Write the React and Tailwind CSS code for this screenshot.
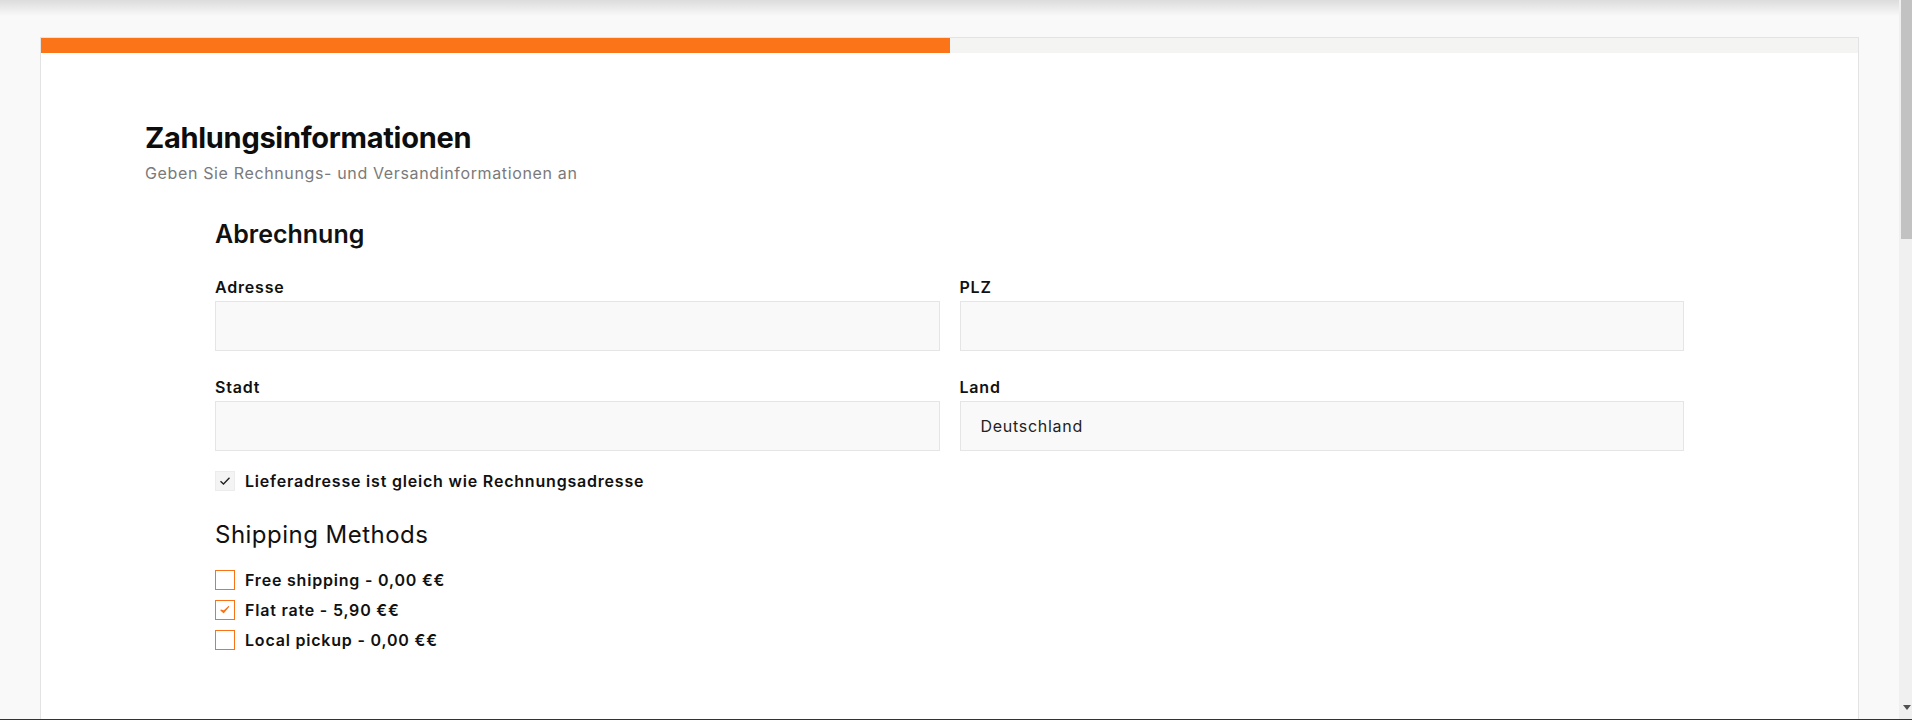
const labelCls = "block text-[16px] leading-[24px] font-semibold tracking-[0.05em] text-[#111]";
const inputCls =
  "block w-full h-[50px] bg-[#f9f9f9] border border-[#e5e5e5] px-5 text-[16px] leading-[24px] tracking-[0.045em] text-[#222] outline-none";

function Field({ label, value, className = "" }) {
  return (
    <div className={className}>
      <label className={labelCls}>{label}</label>
      <input className={`${inputCls} mt-[2px]`} defaultValue={value} />
    </div>
  );
}

function OrangeBox({ checked }) {
  return (
    <span className="w-5 h-5 shrink-0 border border-[#f97316] bg-white flex items-center justify-center">
      {checked && (
        <svg width="10" height="10" viewBox="0 0 10 10">
          <path d="M1 5.2 L3.6 7.6 L8.6 1.6 L4 6 Z" fill="#f97316" stroke="#f97316" strokeWidth="1.2" strokeLinejoin="round" />
        </svg>
      )}
    </span>
  );
}

const methods = [
  { label: "Free shipping - 0,00 €€", checked: false },
  { label: "Flat rate - 5,90 €€", checked: true },
  { label: "Local pickup - 0,00 €€", checked: false },
];

export default function App() {
  return (
    <div className="h-screen flex flex-col overflow-hidden font-['Inter',sans-serif] text-[#111]">
      <div className="flex-1 flex min-h-0">
        <main className="flex-1 flex flex-col bg-[#f9f9f9] min-w-0 min-h-0 overflow-hidden">
          <div className="h-4 shrink-0 bg-gradient-to-b from-[#dcdcdc] to-[#f9f9f9]" />
          <div className="flex-1 mt-[21px] mx-10 bg-white border border-b-0 border-[#e3e3e3]">
            <div className="h-[15px] bg-[#f4f4f2]">
              <div className="h-full w-1/2 bg-[#fb7418]" />
            </div>

            <div className="px-[104px] pt-[67px]">
              <h1 className="text-[29px] leading-[36px] font-bold tracking-[-0.01em] text-[#0d0d0d]">
                Zahlungsinformationen
              </h1>
              <p className="mt-[5px] text-[16px] leading-[24px] tracking-[0.04em] text-[#7a7a7a]">
                Geben Sie Rechnungs- und Versandinformationen an
              </p>

              <div className="px-[70px]">
                <h2 className="mt-[33px] text-[25px] leading-[32px] font-semibold">Abrechnung</h2>

                <div className="mt-[25px] grid grid-cols-2 gap-x-5 gap-y-6">
                  <Field label="Adresse" />
                  <Field label="PLZ" />
                  <Field label="Stadt" />
                  <Field label="Land" value="Deutschland" />
                </div>

                <label className="mt-[18px] flex items-center gap-[10px]">
                  <span className="w-5 h-5 shrink-0 bg-[#f4f4f4] border border-[#ececec] flex items-center justify-center">
                    <svg width="12" height="10" viewBox="0 0 12 10">
                      <path d="M1.5 5.2 L4.5 8 L10.5 1.8" fill="none" stroke="#222" strokeWidth="1.4" />
                    </svg>
                  </span>
                  <span className="text-[16px] leading-[24px] font-semibold tracking-[0.05em]">
                    Lieferadresse ist gleich wie Rechnungsadresse
                  </span>
                </label>

                <h3 className="mt-[26px] text-[24px] leading-[32px] font-normal tracking-[0.02em]">
                  Shipping Methods
                </h3>

                <ul className="mt-[19px] flex flex-col gap-[10px]">
                  {methods.map((m) => (
                    <li key={m.label} className="flex items-center gap-[10px]">
                      <OrangeBox checked={m.checked} />
                      <span className="text-[16px] leading-[20px] font-semibold tracking-[0.05em]">{m.label}</span>
                    </li>
                  ))}
                </ul>
              </div>
            </div>
          </div>
        </main>

        <div className="w-[13px] bg-[#f0f0f0] flex flex-col justify-between">
          <div className="h-[239px] ml-[2px] bg-[#c2c2c2]" />
          <div className="flex justify-end pr-px pb-[9px]">
            <svg width="8" height="5" viewBox="0 0 8 5">
              <path d="M0 0 H8 L4 5 Z" fill="#505050" />
            </svg>
          </div>
        </div>
      </div>
      <div className="h-px shrink-0 bg-[#333]" />
    </div>
  );
}
